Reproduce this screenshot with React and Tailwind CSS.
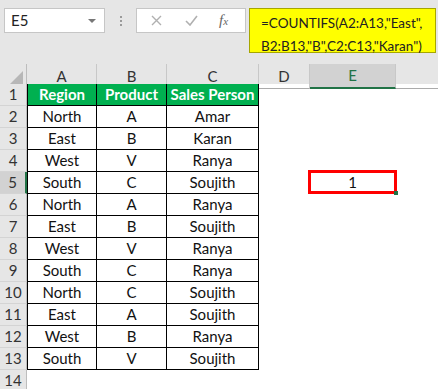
const cols = ['A', 'B', 'C', 'D', 'E']

const rows = [
  ['North', 'A', 'Amar'],
  ['East', 'B', 'Karan'],
  ['West', 'V', 'Ranya'],
  ['South', 'C', 'Soujith'],
  ['North', 'A', 'Ranya'],
  ['East', 'B', 'Soujith'],
  ['West', 'V', 'Ranya'],
  ['South', 'C', 'Ranya'],
  ['North', 'C', 'Soujith'],
  ['East', 'A', 'Soujith'],
  ['West', 'B', 'Ranya'],
  ['South', 'V', 'Soujith'],
]

const grid = 'grid grid-cols-[27px_70px_70px_92px_51px_86px_1fr]'

function RowHead({ n, selected }) {
  return (
    <div
      className={`h-[22px] flex items-center justify-center border-b border-[#d4d4d4] text-[15px] text-[#333] ${
        selected ? 'bg-[#d2d2d2] border-r-2 border-r-[#217346]' : 'bg-[#e6e6e6] border-r border-r-[#bdbdbd]'
      }`}
    >
      {n}
    </div>
  )
}

export default function App() {
  return (
    <div className="w-[438px] h-[389px] overflow-hidden bg-white font-['Lato','Liberation_Sans',sans-serif] text-[#111]">
      {/* ── Formula bar ─────────────────────────────────────────── */}
      <div className="h-[64px] bg-[#e6e6e6] flex items-start pt-[8px] pl-[4px]">
        <div className="w-[101px] h-[25px] bg-white border border-[#c6c6c6] flex items-center justify-between pl-[6px] pr-[8px] text-[15px] text-[#222]">
          <span>E5</span>
          <span className="w-0 h-0 border-l-[4px] border-r-[4px] border-t-[4px] border-l-transparent border-r-transparent border-t-[#777]" />
        </div>
        <div className="w-[31px] h-[25px] flex flex-col items-center justify-center gap-[2px]">
          <span className="w-[2px] h-[2px] bg-[#9a9a9a]" />
          <span className="w-[2px] h-[2px] bg-[#9a9a9a]" />
          <span className="w-[2px] h-[2px] bg-[#9a9a9a]" />
        </div>
        <div className="w-[110px] h-[25px] bg-white border border-[#c6c6c6] flex items-center text-[#aaa]">
          <svg className="ml-[14px]" width="11" height="11" viewBox="0 0 11 11">
            <path d="M1 1L10 10M10 1L1 10" stroke="#b0b0b0" strokeWidth="1.4" fill="none" />
          </svg>
          <svg className="ml-[23px]" width="13" height="11" viewBox="0 0 13 11">
            <path d="M1 6L5 10L12 1" stroke="#b0b0b0" strokeWidth="1.6" fill="none" />
          </svg>
          <span className="ml-[21px] font-['Liberation_Serif',serif] italic text-[15px] text-[#666] leading-none">
            f<span className="text-[11px]">x</span>
          </span>
        </div>
        <div className="ml-[3px] w-[187px] h-[45px] bg-[#ffff00] border border-[#a6a600] pl-[11px] pt-[3px] text-[13.5px] leading-[23px] text-[#222] whitespace-nowrap">
          =COUNTIFS(A2:A13,"East",
          <br />
          B2:B13,"B",C2:C13,"Karan")
        </div>
      </div>

      {/* ── Column headers ─────────────────────────────────────── */}
      <div className={`${grid} h-[20px] bg-[#e6e6e6] text-[15px] text-[#333]`}>
        <div className="border-r border-b border-[#bdbdbd] flex items-end justify-end pr-[3px] pb-[3px]">
          <span className="w-0 h-0 border-l-[14px] border-b-[14px] border-l-transparent border-b-[#b7b7b7]" />
        </div>
        {cols.map((c) => (
          <div
            key={c}
            className={`flex items-center justify-center border-r border-[#c8c8c8] ${
              c === 'E' ? 'bg-[#d2d2d2] border-b-2 border-b-[#217346] text-[#217346]' : 'border-b border-b-[#ababab]'
            }`}
          >
            {c}
          </div>
        ))}
        <div className="border-b border-[#ababab]" />
      </div>

      {/* ── Row 1: table header ────────────────────────────────── */}
      <div className={grid}>
        <RowHead n={1} />
        {['Region', 'Product', 'Sales Person'].map((h, i) => (
          <div
            key={h}
            className={`h-[22px] bg-[#00b050] text-white font-bold text-[15px] flex items-center justify-center border-r border-b border-black ${
              i === 0 ? 'border-l' : ''
            }`}
          >
            {h}
          </div>
        ))}
        <div />
        <div />
        <div />
      </div>

      {/* ── Data rows ──────────────────────────────────────────── */}
      {rows.map((r, idx) => {
        const n = idx + 2
        return (
          <div key={n} className={grid}>
            <RowHead n={n} selected={n === 5} />
            {r.map((v, i) => (
              <div
                key={i}
                className={`h-[22px] text-[15px] flex items-center justify-center border-r border-b border-black ${
                  i === 0 ? 'border-l' : ''
                }`}
              >
                {v}
              </div>
            ))}
            <div />
            <div className="relative h-[22px]">
              {n === 5 && (
                <>
                  <div className="absolute -left-[2px] -top-[2px] -right-[1px] bottom-0 border-[3px] border-[#ff0000] flex items-center justify-center text-[15px]">
                    1
                  </div>
                  <div className="absolute -right-[2px] -bottom-[1px] w-[4px] h-[4px] bg-[#217346]" />
                </>
              )}
            </div>
            <div />
          </div>
        )
      })}

      {/* ── Row 14 ─────────────────────────────────────────────── */}
      <div className={grid}>
        <RowHead n={14} />
      </div>
    </div>
  )
}
